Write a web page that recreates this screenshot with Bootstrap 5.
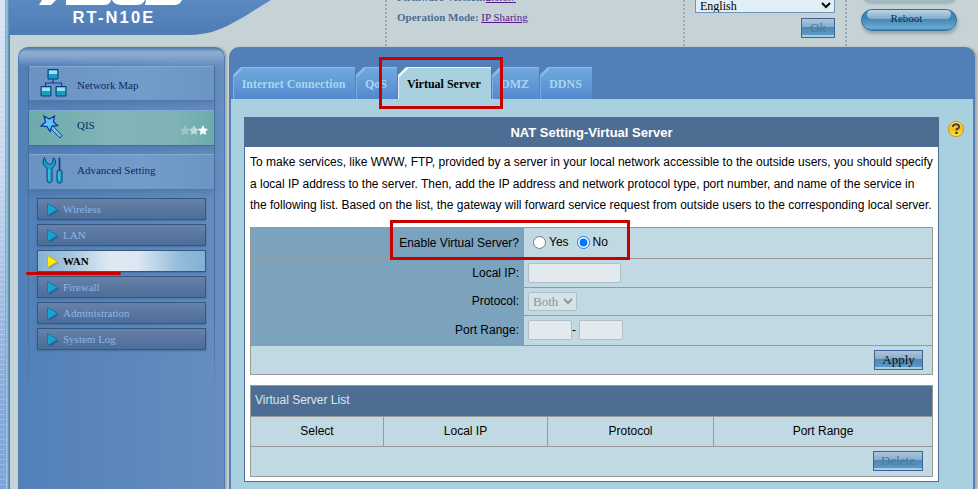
<!DOCTYPE html>
<html lang="en">
<head>
<meta charset="utf-8">
<meta name="viewport" content="width=device-width, initial-scale=1">
<title>RT-N10E - Virtual Server</title>
<link href="https://cdn.jsdelivr.net/npm/bootstrap@5.3.0/dist/css/bootstrap.min.css" rel="stylesheet">
<style>
*{border-radius:0}
body{font-family:"Liberation Serif",serif;font-size:11px;line-height:1.2;background:#c5d2d6;color:#111;height:489px;overflow:hidden}
.page-wrap{width:978px;height:489px}
.edge-strip{width:10px;background:linear-gradient(90deg,transparent 5px,#6a9cbb 5px,#8dbbd0 6px,#a3cedb 7px,#6d9ec9 8px,#477dab 10px),repeating-linear-gradient(0deg,transparent 0 4px,rgba(255,255,255,.22) 4px 5px),linear-gradient(#d6e4f2,#c6d8ef 35%,#8aabdd 80%,#7aa4db)}
.top-bar{height:47px}
.main-area{height:442px}
.brand-zone{width:375px}
.brand-zone svg{display:block}
.dot-col{width:2px;background:repeating-linear-gradient(#9aabb7 0 2px,transparent 2px 4px)}
.info-zone{width:296px;padding-left:10px;color:#4c6d93;font-weight:bold;line-height:20px}
.info-zone .line-a{margin-top:-13px}
.info-zone a{color:#551a8b;font-weight:normal}
.lang-zone{width:160px;padding:0 10px}
.lang-zone select{width:140px;height:15px;margin-top:-2px;background:#e0eff4;border:1px solid #7093bd;border-top:0;font:12px "Liberation Serif",serif;color:#000;padding:0}
.act-btn{font:13px/16px "Liberation Serif",serif;color:#111;border:1px solid #3f6495;background:linear-gradient(#adc5dc,#86abcb 45%,#4e87b3 46%,#5c99c4 88%,#a5cde5 90%);padding:0;height:20px;display:block;text-align:center}
.act-btn.dim{color:#4c799f}
.b-ok{width:34px;margin-top:5px}.b-apply{width:49px}.b-delete{width:50px}
.pill-zone{padding-left:14px}
.reboot-pill{width:96px;height:22px;margin-top:6px;border-radius:11px;background:linear-gradient(#4384b2,#3d84b4 40%,#6ba9d0 90%,#4384b2);border:1px solid #2e6f9e;box-shadow:1px 3px 3px #97a7b1;color:#072a60;text-align:center;line-height:17px;position:relative}
.reboot-pill::before{content:"";position:absolute;left:5px;top:0;width:84px;height:9px;border-radius:5px;background:linear-gradient(#bcd3e4,#7fabcc)}
.reboot-pill span{position:relative;margin-right:5px}
.pill-above{height:10px;margin-top:-7px;width:96px;border-radius:0 0 12px 12px;background:#9fbbc1;box-shadow:1px 1px 2px #a4b3b8}
.side-panel{width:207px;margin-left:8px;border-radius:10px 10px 0 0;background:linear-gradient(#5280b2,#8fadce 4px,#86a7ce 8px,rgba(98,141,194,0) 18px),linear-gradient(90deg,#5280b9,#668ebf);border:1px solid #4c7bb2;border-bottom:0;padding:18px 9px 0 9px;box-shadow:2px 0 2px #a9aaa9}
.side-lines{height:335px;border:1px solid;border-top:0;border-bottom:0;border-image:linear-gradient(#466f9f 75%,rgba(70,111,159,0)) 1}
.side-main{height:35px;color:#0c2b62;border-top:1px solid #82a9d7;border-bottom:1px solid #5278a8;background:linear-gradient(90deg,#6a93c2,#729cca 60%,#6b95c3);box-shadow:0 4px 5px rgba(60,100,150,.35)}
.side-main .big-ico{margin-left:10px;width:30px;height:30px;flex:none}
.side-main .star-ico{width:30px;height:14px;margin:4px 5px 0 auto}
.side-main .cap-text{margin-left:8px;padding-top:5px}
.side-main.quick{margin-top:9px;height:36px;background:linear-gradient(90deg,#6daaac,#82b5b8 45%,#7eb2b4 80%,#6bacaa);border-bottom-color:#44708f}
.side-main.quick .cap-text{padding:0 0 5px}
.side-main.adv{margin-top:8px;height:36px}
.side-main.adv .cap-text{padding:0 0 2px}
.sub-list{margin-top:8px}
.sub-item{height:22px;margin:0 8px 4px;border:1px solid #34577f;background:linear-gradient(#6881a9,#5775a0 55%,#4c6e99);color:#8ab8e3;padding:0 0 0 8px;line-height:14px;box-shadow:0 1px 2px #47709f}
.sub-item svg{width:13px;height:16px;margin:0 4px 1px 0}
.sub-item.now{color:#000;font-weight:bold;background:linear-gradient(90deg,#88b2d3,#a8c6de 20%,#dfe9f3 43%,#dbe7f2 60%,#93bbda 85%,#83b1d5)}
.work-panel{margin-left:4px;width:746px;background:#527fb7;border-radius:10px 10px 0 0;padding:20px 2px 0;box-shadow:2px 0 2px #a7a9ab}
.tab-row{height:32px;padding-left:2px;gap:1px;font-size:12px;font-weight:bold;line-height:33px}
.tab-cell{clip-path:polygon(8px 0,100% 0,100% 100%,0 100%,0 8px);background:linear-gradient(135deg,#8bbce8 6.5px,transparent 7px),linear-gradient(#70a9df,#5389cd);border-top:1px solid #87bde9;border-left:1px solid #7db4e4;color:#a9d5f0;text-align:center;white-space:nowrap;padding-right:2px}
.tab-cell.live{background:linear-gradient(135deg,#eef8fa 6.5px,#a9d0de 7px);border-color:#e6f4f7;color:#000}
.t1{width:122px}.t2{width:41px}.t3{width:93px}.t4{width:47px}.t5{width:52px}
.work-body{background:#a9d0de;height:390px;padding:18px 0 0 13px;font-family:"Liberation Sans",sans-serif;font-size:12px;color:#000}
.nat-box{width:695px;height:365px;border:1px solid #4d6d95;background:#fff}
.nat-head{height:29px;background:#4d6d93;color:#fff;font-size:13px;font-weight:bold;text-align:center;line-height:29px}
.nat-text{padding:5px 0 0 5px;line-height:21.6px;height:80px;white-space:nowrap}
.form-grid,.list-grid{margin-left:5px;width:683px;border:1px solid #999;background:#c0d9e2}
.form-line{border-bottom:1px solid #999}
.key-cell{width:273px;background:#7ba3bd;border-right:1px solid #999;text-align:right;padding-right:4px}
.val-cell{padding-left:4px}
.val-cell.radios{padding:0 0 2px 9px}
.yes-cap{margin:0 8px 0 3px}.no-cap{margin-left:3px}
.h30{height:31px}.h28{height:29px}.h27{height:28px}.h29{height:30px}
.in-box{width:93px;height:20px;background:#e2eaed;border:1px solid #aebfc7;border-radius:2px;display:block}
.port-cell{padding-bottom:2px}
.in-box.port{width:44px}
.dash{width:7px;padding-top:2px}
.both-pick{width:49px;height:19px;font:13px "Liberation Serif",serif;color:#8c979c;background:#d5e2e7;border:1px solid #aebfc7;border-radius:2px;padding:0}
input[type=radio]{width:13px;height:13px;margin:0}
.foot-line{padding-right:9px}
.list-grid{margin-top:10px}
.list-head{height:31px;background:#4d6d93;color:#dce8f2;padding-left:4px;line-height:28px;border-bottom:1px solid #999}
.list-cols{height:30px;border-bottom:1px solid #999;text-align:center;line-height:29px}
.list-cols>div+div{border-left:1px solid #999}
.c1{width:132px}.c2{width:164px}.c3{width:166px}
.red-mark{position:absolute;border:3px solid #c80000;pointer-events:none}
.m-tab{left:379px;top:57px;width:124px;height:52px}
.m-enable{left:390px;top:220px;width:240px;height:40px}
.m-wan{left:26px;top:272px;width:95px;height:3px;border-width:0 0 3px;border-radius:2px}
.help-ico{margin:3px 0 0 8px}
</style>
</head>
<body>
<div class="page-wrap d-flex position-relative">
  <div class="edge-strip flex-shrink-0"></div>
  <div class="flex-grow-1">
    <header class="top-bar d-flex">
      <div class="brand-zone flex-shrink-0">
        <svg width="270" height="47" viewBox="10 0 270 47">
          <defs><linearGradient id="bg" x2="0" y2="1"><stop stop-color="#5b89c1"/><stop offset="1" stop-color="#4e7bb2"/></linearGradient></defs>
          <path d="M10 0H271C256 9 236 23 220 29Q207 35 185 35H10Z" fill="url(#bg)"/>
          <path d="M42 0H56L51 5H39ZM66 0H111Q110 5 104 5H66ZM112 0H145Q143 5 137 5H122Q114 5 112 0ZM146 0H182Q180 5 174 5H145Z" fill="#fff"/>
          <text x="72.5" y="23" font-family="Liberation Sans" font-weight="bold" font-size="16.500" fill="#fff" letter-spacing="2.15">RT-N10E</text>
        </svg>
      </div>
      <div class="dot-col"></div>
      <div class="info-zone">
        <div class="line-a">Firmware Version:<a href="#">2.0.0.7</a></div>
        <div>Operation Mode: <a href="#">IP Sharing</a></div>
      </div>
      <div class="dot-col"></div>
      <div class="lang-zone">
        <select class="d-block"><option>English</option></select>
        <button class="act-btn dim ms-auto b-ok">Ok</button>
      </div>
      <div class="dot-col"></div>
      <div class="pill-zone">
        <div class="pill-above"></div>
        <div class="reboot-pill"><span>Reboot</span></div>
      </div>
    </header>
    <div class="main-area d-flex">
      <nav class="side-panel flex-shrink-0">
        <div class="side-lines">
          <div class="side-main d-flex align-items-center">
            <svg class="big-ico" viewBox="0 3 30 30"><path d="M14 13V17M6.500 21V17H22.500V21" fill="none" stroke="#123f85" stroke-width="1.200"/><g fill="#169dc3" stroke="#063e88"><path d="M9 3.500H19V13H9ZM2 20.500H12V30H2ZM17 20.500H27V30H17Z"/></g><path d="M10 4.500H18V8H10ZM3 21.500H11V25H3ZM18 21.500H26V25H18Z" fill="#9de0e7"/></svg>
            <span class="cap-text">Network Map</span>
          </div>
          <div class="side-main quick d-flex align-items-center">
            <svg class="big-ico" viewBox="0 1 30 30"><path d="M14 14L23 23.500L21 26L11 16Z" fill="#6fc2f0" stroke="#1b3f9b"/><path d="M5 4L10.500 7L15.500 4L14.500 10L18.500 13.500L13 14L11 19.500L8 14.500L2 14L6.500 10Z" fill="#62c4f4" stroke="#1238a4" stroke-width="1.300"/></svg>
            <span class="cap-text">QIS</span>
            <svg class="star-ico" viewBox="0 0 30 14"><g fill="#fff"><path opacity=".28" d="M6 2L7.500 5.500L11 6L8.500 8.500L9 12L6 10.300L3 12L3.500 8.500L1 6L4.500 5.500Z"/><path opacity=".55" transform="translate(9)" d="M6 2L7.500 5.500L11 6L8.500 8.500L9 12L6 10.300L3 12L3.500 8.500L1 6L4.500 5.500Z"/><path transform="translate(18)" d="M6 2L7.500 5.500L11 6L8.500 8.500L9 12L6 10.300L3 12L3.500 8.500L1 6L4.500 5.500Z"/></g></svg>
          </div>
          <div class="side-main adv d-flex align-items-center">
            <svg class="big-ico" viewBox="0 2 30 30" fill="#18a4c8" stroke="#06458c"><path d="M5.500 2.500Q3 6 4.500 9.500Q5.500 11.500 8 13V26Q10.500 30 13 26V13Q16 11.500 16.500 8Q17 5 14.500 2.500L13.500 8L10.500 9.500L7.500 8Z"/><path d="M20.500 2.500V15.500" stroke-width="1.700"/><rect x="18" y="15" width="5" height="13" rx="2"/><path d="M10 14V25M20 17V25" stroke="#69d1df"/></svg>
            <span class="cap-text">Advanced Setting</span>
          </div>
          <div class="sub-list">
            <div class="sub-item d-flex align-items-center"><svg viewBox="0 0 13 16"><path d="M3 4L13 10L3 16Z" fill="#365f8f"/><path d="M1.500 2.500L11.500 8.500L1.500 14.500Z" fill="#1ba3d0" stroke="#1177b3"/></svg>Wireless</div>
            <div class="sub-item d-flex align-items-center"><svg viewBox="0 0 13 16"><path d="M3 4L13 10L3 16Z" fill="#365f8f"/><path d="M1.500 2.500L11.500 8.500L1.500 14.500Z" fill="#1ba3d0" stroke="#1177b3"/></svg>LAN</div>
            <div class="sub-item now d-flex align-items-center"><svg viewBox="0 0 13 16"><path d="M3 4L13 10L3 16Z" fill="#829db5"/><path d="M1.500 2.500L11.500 8.500L1.500 14.500Z" fill="#fff200" stroke="#d7a62b"/></svg>WAN</div>
            <div class="sub-item d-flex align-items-center"><svg viewBox="0 0 13 16"><path d="M3 4L13 10L3 16Z" fill="#365f8f"/><path d="M1.500 2.500L11.500 8.500L1.500 14.500Z" fill="#1ba3d0" stroke="#1177b3"/></svg>Firewall</div>
            <div class="sub-item d-flex align-items-center"><svg viewBox="0 0 13 16"><path d="M3 4L13 10L3 16Z" fill="#365f8f"/><path d="M1.500 2.500L11.500 8.500L1.500 14.500Z" fill="#1ba3d0" stroke="#1177b3"/></svg>Administration</div>
            <div class="sub-item d-flex align-items-center"><svg viewBox="0 0 13 16"><path d="M3 4L13 10L3 16Z" fill="#365f8f"/><path d="M1.500 2.500L11.500 8.500L1.500 14.500Z" fill="#1ba3d0" stroke="#1177b3"/></svg>System Log</div>
          </div>
        </div>
      </nav>
      <main class="work-panel flex-shrink-0">
        <div class="tab-row d-flex">
          <div class="tab-cell t1">Internet Connection</div>
          <div class="tab-cell t2">QoS</div>
          <div class="tab-cell live t3">Virtual Server</div>
          <div class="tab-cell t4">DMZ</div>
          <div class="tab-cell t5">DDNS</div>
        </div>
        <div class="work-body d-flex align-items-start">
          <section class="nat-box flex-shrink-0">
            <div class="nat-head">NAT Setting-Virtual Server</div>
            <div class="nat-text">To make services, like WWW, FTP, provided by a server in your local network accessible to the outside users, you should specify<br>a local IP address to the server. Then, add the IP address and network protocol type, port number, and name of the service in<br>the following list. Based on the list, the gateway will forward service request from outside users to the corresponding local server.</div>
            <div class="form-grid">
              <div class="form-line d-flex h30">
                <label class="key-cell d-flex align-items-center justify-content-end">Enable Virtual Server?</label>
                <div class="val-cell radios d-flex align-items-center"><input type="radio" name="en"><span class="yes-cap">Yes</span><input type="radio" name="en" checked><span class="no-cap">No</span></div>
              </div>
              <div class="form-line d-flex h28">
                <label class="key-cell d-flex align-items-center justify-content-end">Local IP:</label>
                <div class="val-cell d-flex align-items-center"><span class="in-box"></span></div>
              </div>
              <div class="form-line d-flex h27">
                <label class="key-cell d-flex align-items-center justify-content-end">Protocol:</label>
                <div class="val-cell d-flex align-items-center"><select class="both-pick" disabled><option>Both</option></select></div>
              </div>
              <div class="form-line d-flex h29">
                <label class="key-cell d-flex align-items-center justify-content-end">Port Range:</label>
                <div class="val-cell port-cell d-flex align-items-center"><span class="in-box port"></span><span class="dash">-</span><span class="in-box port"></span></div>
              </div>
              <div class="foot-line d-flex align-items-center justify-content-end h27"><button class="act-btn b-apply">Apply</button></div>
            </div>
            <div class="list-grid">
              <div class="list-head">Virtual Server List</div>
              <div class="list-cols d-flex">
                <div class="c1">Select</div><div class="c2">Local IP</div><div class="c3">Protocol</div><div class="flex-grow-1">Port Range</div>
              </div>
              <div class="foot-line d-flex align-items-start justify-content-end h28 pt-1"><button class="act-btn dim b-delete">Delete</button></div>
            </div>
          </section>
          <svg class="help-ico" width="18" height="18" viewBox="0 0 18 18"><defs><linearGradient id="yl" x2="0" y2="1"><stop stop-color="#ffe56b"/><stop offset=".5" stop-color="#efbd18"/><stop offset="1" stop-color="#ffe84d"/></linearGradient></defs><circle cx="9" cy="9" r="7.600" fill="url(#yl)" stroke="#c99a16"/><path d="M5.800 7Q6 4.200 9 4.200T12.200 6.800Q12.200 8.300 9.500 9.500V10.500" fill="none" stroke="#494438" stroke-width="2"/><rect x="8.200" y="11.800" width="2.600" height="2.200" fill="#494438"/></svg>
        </div>
      </main>
    </div>
  </div>
  <div class="red-mark m-tab"></div>
  <div class="red-mark m-enable"></div>
  <div class="red-mark m-wan"></div>
</div>
<script src="https://cdn.jsdelivr.net/npm/bootstrap@5.3.0/dist/js/bootstrap.bundle.min.js"></script>
</body>
</html>
